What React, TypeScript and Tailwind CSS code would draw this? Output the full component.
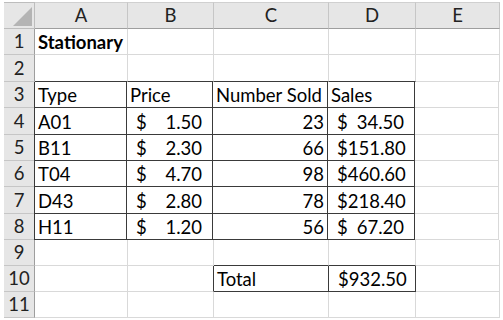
const COLS = [
  { label: 'A', w: 'w-[93px]' },
  { label: 'B', w: 'w-[86px]' },
  { label: 'C', w: 'w-[115px]' },
  { label: 'D', w: 'w-[87px]' },
  { label: 'E', w: 'w-[84px]' },
];

const ROW_H = ['h-[26px]', 'h-[27px]', 'h-[26px]', 'h-[27px]', 'h-[26px]', 'h-[26px]', 'h-[27px]', 'h-[26px]', 'h-[26px]', 'h-[26px]', 'h-[26px]'];

type Cell = { text?: string; bold?: boolean; money?: boolean; right?: boolean };

const data: Record<string, Cell> = {
  '1-0': { text: 'Stationary', bold: true },
  '3-0': { text: 'Type' },
  '3-1': { text: 'Price' },
  '3-2': { text: 'Number Sold' },
  '3-3': { text: 'Sales' },
  '4-0': { text: 'A01' }, '4-1': { text: '1.50', money: true }, '4-2': { text: '23', right: true }, '4-3': { text: '34.50', money: true },
  '5-0': { text: 'B11' }, '5-1': { text: '2.30', money: true }, '5-2': { text: '66', right: true }, '5-3': { text: '151.80', money: true },
  '6-0': { text: 'T04' }, '6-1': { text: '4.70', money: true }, '6-2': { text: '98', right: true }, '6-3': { text: '460.60', money: true },
  '7-0': { text: 'D43' }, '7-1': { text: '2.80', money: true }, '7-2': { text: '78', right: true }, '7-3': { text: '218.40', money: true },
  '8-0': { text: 'H11' }, '8-1': { text: '1.20', money: true }, '8-2': { text: '56', right: true }, '8-3': { text: '67.20', money: true },
  '10-2': { text: 'Total' }, '10-3': { text: '932.50', money: true },
};

// cells that carry a thin black border
function boxed(r: number, c: number) {
  if (r >= 3 && r <= 8 && c >= 0 && c <= 3) return true;
  if (r === 10 && (c === 2 || c === 3)) return true;
  return false;
}

export default function App() {
  return (
    <div className="w-[503px] h-[320px] overflow-hidden bg-white pl-[4px] pt-[2px] text-[18.5px] text-black leading-none" style={{ fontFamily: 'Lato, "Liberation Sans", sans-serif' }}>
      {/* column header row */}
      <div className="flex h-[27px]">
        <div className="relative w-[31px] shrink-0 bg-[#e6e6e6] border-r border-b border-t border-[#bdbdbd]">
          <div className="absolute right-[2px] bottom-[2px] w-0 h-0 border-l-[19px] border-l-transparent border-b-[19px] border-b-[#b4b4b4]" />
        </div>
        {COLS.map((c) => (
          <div key={c.label} className={`${c.w} shrink-0 flex items-center justify-center bg-[#e6e6e6] border-r border-b border-t border-r-[#c6c6c6] border-t-[#d0d0d0] border-b-[#9e9e9e] text-[#222]`}>
            {c.label}
          </div>
        ))}
      </div>
      {ROW_H.map((h, i) => {
        const r = i + 1;
        return (
          <div key={r} className={`flex ${h}`}>
            <div className="w-[31px] shrink-0 flex items-center justify-center bg-[#e6e6e6] border-r border-b border-r-[#9e9e9e] border-b-[#c6c6c6] text-[#222]">
              {r}
            </div>
            {COLS.map((col, c) => {
              const cell = data[`${r}-${c}`];
              const darkR = boxed(r, c) || boxed(r, c + 1);
              const darkB = boxed(r, c) || boxed(r + 1, c);
              const darkL = c === 0 && boxed(r, c);
              return (
                <div
                  key={col.label}
                  className={`${col.w} shrink-0 flex items-end pb-[3px] pl-[3px] pr-[3px] border-r border-b whitespace-nowrap ${darkR ? 'border-r-[#3a3a3a]' : 'border-r-[#d9d9d9]'} ${darkB ? 'border-b-[#3a3a3a]' : 'border-b-[#d9d9d9]'} ${darkL ? 'border-l border-l-[#3a3a3a] -ml-px' : ''} ${cell?.bold ? 'font-bold' : ''}`}
                >
                  {cell?.money ? (
                    <div className="flex w-full justify-between pl-[6px] pr-[7px]">
                      <span>$</span>
                      <span>{cell.text}</span>
                    </div>
                  ) : cell?.right ? (
                    <div className="w-full text-right">{cell.text}</div>
                  ) : (
                    <span>{cell?.text}</span>
                  )}
                </div>
              );
            })}
          </div>
        );
      })}
    </div>
  );
}
